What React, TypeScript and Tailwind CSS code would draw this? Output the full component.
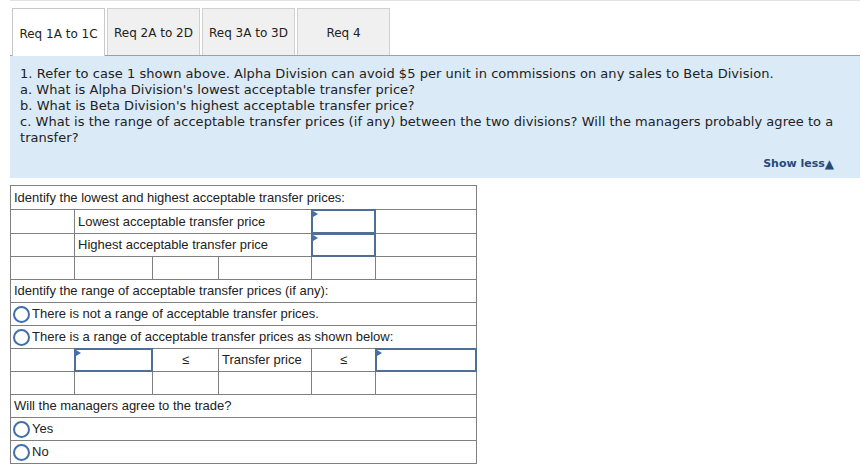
import React from "react";

const arial = { fontFamily: '"Liberation Sans", Arial, sans-serif' };
const verdana = { fontFamily: '"DejaVu Sans", Verdana, sans-serif' };

function Radio() {
  return (
    <span className="inline-block w-[17px] h-[17px] rounded-full border-2 border-[#3f70ab] bg-white shrink-0" />
  );
}

function InputBox() {
  return (
    <div className="relative -m-px border-2 border-[#4f6f98] bg-white z-10">
      <span className="absolute top-0 left-0 w-0 h-0 border-y-[3px] border-y-transparent border-l-[5px] border-l-[#3f70ab]" />
    </div>
  );
}

function Cell({ className = "", children }: { className?: string; children?: React.ReactNode }) {
  return <div className={`bg-white flex items-center ${className}`}>{children}</div>;
}

export default function App() {
  const tabs = ["Req 1A to 1C", "Req 2A to 2D", "Req 3A to 3D", "Req 4"];
  return (
    <div className="w-[862px] h-[472px] bg-white pl-[10px] pr-[2px] text-[#222]">
      <div className="h-px bg-[#e3e3e3]" />
      <div className="flex items-end gap-[2px] pl-[2px] pt-[7px] border-b border-[#a0a0a0]" style={verdana}>
        {tabs.map((t, i) => (
          <div
            key={t}
            className={
              i === 0
                ? "w-[93px] h-[48px] -mb-px pt-[2px] bg-white border border-b-0 border-[#c8c8c8] flex items-center justify-center text-[12px] text-[#222]"
                : "w-[93px] h-[47px] pt-[2px] bg-[#f0f0f0] border border-b-0 border-[#d0d0d0] flex items-center justify-center text-[12px] text-[#222]"
            }
          >
            {t}
          </div>
        ))}
      </div>
      <div className="bg-[#dbeaf7] h-[122px] pt-[10px] px-[10px] flex flex-col" style={verdana}>
        <div className="text-[13px] leading-[16px] text-[#222] tracking-[0.04px]">
          <div>1. Refer to case 1 shown above. Alpha Division can avoid $5 per unit in commissions on any sales to Beta Division.</div>
          <div>a. What is Alpha Division's lowest acceptable transfer price?</div>
          <div>b. What is Beta Division's highest acceptable transfer price?</div>
          <div>c. What is the range of acceptable transfer prices (if any) between the two divisions? Will the managers probably agree to a transfer?</div>
        </div>
        <div className="mt-[10px] flex justify-end pr-[16px] text-[11px] font-bold text-[#254a7c] items-center">
          <span>Show less</span>
          <span className="text-[12px] leading-none">▲</span>
        </div>
      </div>

      <div
        className="mt-[7px] w-[467px] grid gap-px bg-[#7f7f7f] border border-[#7f7f7f] grid-cols-[63px_77px_65px_92px_63px_100px] grid-rows-[23px_23px_22px_22px_22px_22px_22px_22px_22px_22px_22px_22px] text-[13px] text-[#222]"
        style={arial}
      >
        <Cell className="col-span-6 px-[3px]">Identify the lowest and highest acceptable transfer prices:</Cell>

        <Cell />
        <Cell className="col-span-3 px-[3px]">Lowest acceptable transfer price</Cell>
        <InputBox />
        <Cell />

        <Cell />
        <Cell className="col-span-3 px-[3px]">Highest acceptable transfer price</Cell>
        <InputBox />
        <Cell />

        <Cell />
        <Cell />
        <Cell />
        <Cell />
        <Cell />
        <Cell />

        <Cell className="col-span-6 px-[3px]">Identify the range of acceptable transfer prices (if any):</Cell>
        <Cell className="col-span-6 pl-[2px] gap-[2px]">
          <Radio />
          <span>There is not a range of acceptable transfer prices.</span>
        </Cell>
        <Cell className="col-span-6 pl-[2px] gap-[2px]">
          <Radio />
          <span>There is a range of acceptable transfer prices as shown below:</span>
        </Cell>

        <Cell />
        <InputBox />
        <Cell className="justify-center">≤</Cell>
        <Cell className="px-[3px]">Transfer price</Cell>
        <Cell className="justify-center">≤</Cell>
        <InputBox />

        <Cell />
        <Cell />
        <Cell />
        <Cell />
        <Cell />
        <Cell />

        <Cell className="col-span-6 px-[3px]">Will the managers agree to the trade?</Cell>
        <Cell className="col-span-6 pl-[2px] gap-[2px]">
          <Radio />
          <span>Yes</span>
        </Cell>
        <Cell className="col-span-6 pl-[2px] gap-[2px]">
          <Radio />
          <span>No</span>
        </Cell>
      </div>
    </div>
  );
}
